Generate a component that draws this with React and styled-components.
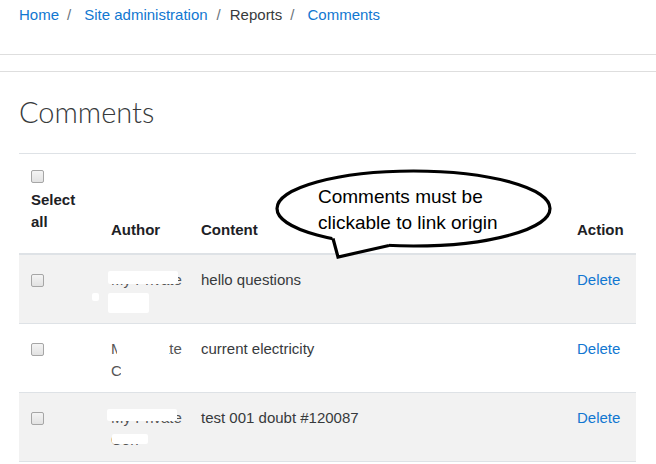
import React from 'react';
import styled, { createGlobalStyle } from 'styled-components';

const GlobalStyle = createGlobalStyle`
  body {
    margin: 0;
    background: #fff;
    color: #373a3c;
    font-family: "Liberation Sans", Arial, sans-serif;
    font-size: 15px;
  }
`;

const comments = [
  { id: 1, content: 'hello questions', author: 'My Private', rest: 'Con', blobs: [[-3, 2, 70, 13], [-19, 24, 7, 8], [-3, 24, 41, 20]] },
  { id: 2, content: 'current electricity', author: 'My Private', rest: 'Con', blobs: [[6, 0, 52, 21], [10, 26, 40, 20]] },
  { id: 3, content: 'test 001 doubt #120087', author: 'My Private', rest: 'Con', blobs: [[-4, 2, 70, 12], [1, 27, 36, 10]] },
];

function Checkbox({ head }) {
  return <Box type="checkbox" $head={head} readOnly />;
}

function Bubble() {
  return (
    <BubbleWrap>
      <svg width="290" height="104" viewBox="0 0 290 104">
        <ellipse cx="143.5" cy="49.5" rx="136.5" ry="37.5" fill="#fff" stroke="#000" strokeWidth="3.2" />
        <polygon points="62,77 68,98 119,88 119,83" fill="#fff" />
        <polyline points="63,79.5 68,98 119,86.5" fill="none" stroke="#000" strokeWidth="3.2" strokeLinejoin="miter" />
        <BubbleText x="48" y="44">Comments must be</BubbleText>
        <BubbleText x="48" y="70">clickable to link origin</BubbleText>
      </svg>
    </BubbleWrap>
  );
}

export default function App() {
  return (
    <>
      <GlobalStyle />
      <Crumbs>
        <CrumbLink>Home</CrumbLink>
        <Sep>/</Sep>
        <CrumbLink>Site administration</CrumbLink>
        <Sep $tight>/</Sep>
        <CrumbText>Reports</CrumbText>
        <Sep>/</Sep>
        <CrumbLink>Comments</CrumbLink>
      </Crumbs>
      <Spacer />
      <Main>
        <Heading>Comments</Heading>
        <TableWrap>
          <Table>
            <colgroup>
              <col style={{ width: 80 }} />
              <col style={{ width: 90 }} />
              <col />
              <col style={{ width: 71 }} />
            </colgroup>
            <thead>
              <tr>
                <SelectHead>
                  <Checkbox head />
                  Select all
                </SelectHead>
                <Th>Author</Th>
                <Th>Content</Th>
                <Th>Action</Th>
              </tr>
            </thead>
            <tbody>
              {comments.map((c, i) => (
                <Row key={c.id} $striped={i % 2 === 0}>
                  <Td><Checkbox /></Td>
                  <Td>
                    <Author>
                      {c.author}
                      <br />
                      {c.rest}
                      {c.blobs.map(([l, t, w, h], k) => (
                        <Blob key={k} style={{ left: l, top: t, width: w, height: h }} />
                      ))}
                    </Author>
                  </Td>
                  <Td>{c.content}</Td>
                  <Td><Action>Delete</Action></Td>
                </Row>
              ))}
            </tbody>
          </Table>
          <Bubble />
        </TableWrap>
      </Main>
    </>
  );
}

const Crumbs = styled.nav`
  display: flex;
  align-items: center;
  height: 55px;
  padding: 0 19px 25px;
  box-sizing: border-box;
  border-bottom: 1px solid #dedede;
  font-size: 15px;
  line-height: 22px;
`;

const CrumbLink = styled.a`
  color: #1177d1;
  text-decoration: none;
`;

const CrumbText = styled.span`
  color: #373a3c;
`;

const Sep = styled.span`
  color: #6a737b;
  margin: ${({ $tight }) => ($tight ? '0 9px 0 9px' : '0 13px 0 8px')};
`;

const Spacer = styled.div`
  height: 16px;
  border-bottom: 1px solid #dedede;
`;

const Main = styled.main`
  padding: 0 20px 0 19px;
`;

const Heading = styled.h2`
  margin: 22px 0 23px;
  font-family: Lato, "Liberation Sans", sans-serif;
  font-weight: 300;
  font-size: 29px;
  line-height: 36px;
  color: #373a3c;
`;

const TableWrap = styled.div`
  position: relative;
`;

const Table = styled.table`
  width: 100%;
  table-layout: fixed;
  border-collapse: collapse;
  font-size: 15px;
  line-height: 22px;
`;

const Th = styled.th`
  text-align: left;
  vertical-align: bottom;
  padding: 12px 12px 12px;
  border-top: 1px solid #dee2e6;
  border-bottom: 2px solid #dee2e6;
  font-weight: bold;
  color: #1d2125;
`;

const SelectHead = styled(Th)`
  vertical-align: top;
  padding-bottom: 20px;
`;

const Row = styled.tr`
  background: ${({ $striped }) => ($striped ? '#f2f2f2' : '#fff')};
  border-bottom: 1px solid #dee2e6;
`;

const Td = styled.td`
  vertical-align: top;
  padding: 14px 12px 10px;
  color: #373a3c;
`;

const Box = styled.input`
  appearance: none;
  display: block;
  width: 13px;
  height: 13px;
  margin: ${({ $head }) => ($head ? '4px 0 6px' : '5px 0 0')};
  border: 1px solid #a6a6a6;
  border-radius: 2px;
  background: linear-gradient(#f4f4f4, #e2e2e2);
  box-sizing: border-box;
`;

const Author = styled.div`
  position: relative;
  white-space: nowrap;
  color: #555;
`;

const Blob = styled.span`
  position: absolute;
  background: #fff;
  border-radius: 2px;
`;

const Action = styled.a`
  color: #1177d1;
  text-decoration: none;
`;

const BubbleWrap = styled.div`
  position: absolute;
  left: 251px;
  top: 6px;
  width: 290px;
  height: 104px;
  pointer-events: none;
`;

const BubbleText = styled.text`
  font-family: "Liberation Sans", Arial, sans-serif;
  font-size: 19px;
  fill: #000;
`;
